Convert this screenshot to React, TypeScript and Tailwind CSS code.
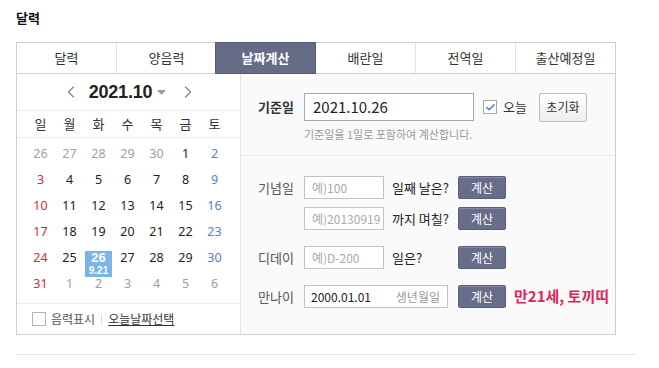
import { Check, ChevronLeft, ChevronRight } from 'lucide-react';

const FONT = { fontFamily: '"Noto Sans CJK KR", "Noto Sans", sans-serif' };

const tabs = ['달력', '양음력', '날짜계산', '배란일', '전역일', '출산예정일'];
const weekdays = ['일', '월', '화', '수', '목', '금', '토'];

type Day = { d: number; other?: boolean; lunar?: string };

const weeks: Day[][] = [
  [{ d: 26, other: true }, { d: 27, other: true }, { d: 28, other: true }, { d: 29, other: true }, { d: 30, other: true }, { d: 1 }, { d: 2 }],
  [{ d: 3 }, { d: 4 }, { d: 5 }, { d: 6 }, { d: 7 }, { d: 8 }, { d: 9 }],
  [{ d: 10 }, { d: 11 }, { d: 12 }, { d: 13 }, { d: 14 }, { d: 15 }, { d: 16 }],
  [{ d: 17 }, { d: 18 }, { d: 19 }, { d: 20 }, { d: 21 }, { d: 22 }, { d: 23 }],
  [{ d: 24 }, { d: 25 }, { d: 26, lunar: '9.21' }, { d: 27 }, { d: 28 }, { d: 29 }, { d: 30 }],
  [{ d: 31 }, { d: 1, other: true }, { d: 2, other: true }, { d: 3, other: true }, { d: 4, other: true }, { d: 5, other: true }, { d: 6, other: true }],
];

function dayColor(day: Day, col: number) {
  if (day.other) return 'text-[#a0a0a0]';
  if (col === 0) return 'text-[#e0263c]';
  if (col === 6) return 'text-[#5b7dd6]';
  return 'text-[#222]';
}

function CalcButton() {
  return (
    <button className="w-[48px] h-[23px] rounded-[2px] bg-[#686d89] border border-[#5a5e78] text-white text-[12px] leading-none shadow-[inset_0_1px_0_#8488a2]">
      계산
    </button>
  );
}

function Calendar() {
  return (
    <div className="w-[224px] border-r border-[#e3e3e3] bg-white flex flex-col">
      {/* 헤더 */}
      <div className="h-[37px] border-b border-[#ececec] flex items-center justify-center pl-[2px]">
        <ChevronLeft className="w-[20px] h-[20px] text-[#888]" strokeWidth={1.6} />
        <span className="ml-[8px] text-[18px] font-bold text-[#222] tracking-[-0.2px]" style={{ fontFamily: '"Liberation Sans", Arial, sans-serif' }}>
          2021.10
        </span>
        <svg width="9" height="6" viewBox="0 0 9 6" className="ml-[5px] mt-[2px]">
          <path d="M0 0 L9 0 L4.5 5 Z" fill="#9a9a9a" />
        </svg>
        <ChevronRight className="ml-[12px] w-[20px] h-[20px] text-[#888]" strokeWidth={1.6} />
      </div>

      {/* 요일 */}
      <div className="h-[27px] border-b border-[#ececec] px-[9px] grid grid-cols-[repeat(7,29px)] items-center">
        {weekdays.map(w => (
          <span key={w} className="text-center text-[13px] text-[#333]">{w}</span>
        ))}
      </div>

      {/* 날짜 */}
      <div className="pt-[9px] px-[9px] grid grid-cols-[repeat(7,29px)] grid-rows-[repeat(6,26px)]" style={{ fontFamily: '"Noto Sans", sans-serif' }}>
        {weeks.map((week, wi) =>
          week.map((day, ci) =>
            day.lunar ? (
              <div key={`${wi}-${ci}`} className="flex justify-center">
                <div
                  className="w-[27px] h-[26px] bg-[#78b5e8] flex flex-col items-center text-white"
                  style={{ fontFamily: '"Liberation Sans", Arial, sans-serif' }}
                >
                  <span className="text-[13px] font-bold leading-[14px]">{day.d}</span>
                  <span className="text-[10px] font-bold leading-[12px]">{day.lunar}</span>
                </div>
              </div>
            ) : (
              <span key={`${wi}-${ci}`} className={`text-center text-[12.5px] leading-[14px] ${dayColor(day, ci)}`}>
                {day.d}
              </span>
            )
          )
        )}
      </div>

      {/* 하단 */}
      <div className="h-[31px] border-t border-[#ececec] flex items-center pl-[15px] text-[12px] text-[#555]">
        <span className="w-[14px] h-[14px] border border-[#b5b5b5] bg-white" />
        <span className="ml-[5px]">음력표시</span>
        <span className="mx-[6px] w-px h-[10px] bg-[#ddd]" />
        <span className="underline text-[#333]">오늘날짜선택</span>
      </div>
    </div>
  );
}

function Calculator() {
  return (
    <div className="flex-1 bg-[#fafafa]">
      {/* 기준일 */}
      <div className="h-[82px] border-b border-[#ececec] pl-[17px] pt-[19px]">
        <div className="flex items-center h-[28px]">
          <span className="w-[46px] text-[13px] font-bold text-[#333]">기준일</span>
          <div className="w-[170px] h-[28px] border border-[#a9a9a9] bg-white flex items-center pl-[8px] text-[15px] text-[#222]">
            2021.10.26
          </div>
          <span className="ml-[9px] w-[14px] h-[14px] border border-[#a8a8a8] bg-white flex items-center justify-center">
            <Check className="w-[11px] h-[11px] text-[#4a6fdc]" strokeWidth={3} />
          </span>
          <span className="ml-[6px] text-[13px] text-[#333]">오늘</span>
          <button className="ml-[12px] w-[48px] h-[29px] border border-[#bdbdbd] rounded-[2px] bg-gradient-to-b from-white to-[#eeeeee] text-[12px] text-[#333]">
            초기화
          </button>
        </div>
        <p className="ml-[46px] mt-[6px] text-[11px] text-[#999] leading-[14px]">기준일을 1일로 포함하여 계산합니다.</p>
      </div>

      {/* 계산 항목 */}
      <div className="pl-[17px] pt-[20px] flex flex-col text-[13px]">
        <div className="flex items-center h-[23px]">
          <span className="w-[46px] text-[#555]">기념일</span>
          <div className="w-[80px] h-[23px] border border-[#c3c3c3] bg-white flex items-center pl-[7px] text-[12px] text-[#aaa]">예)100</div>
          <span className="ml-[8px] w-[66px] text-[#222]">일째 날은?</span>
          <CalcButton />
        </div>
        <div className="flex items-center h-[23px] mt-[8px]">
          <span className="w-[46px]" />
          <div className="w-[80px] h-[23px] border border-[#c3c3c3] bg-white flex items-center pl-[7px] text-[12px] text-[#aaa]">예)20130919</div>
          <span className="ml-[8px] w-[66px] text-[#222]">까지 며칠?</span>
          <CalcButton />
        </div>
        <div className="flex items-center h-[23px] mt-[16px]">
          <span className="w-[46px] text-[#555]">디데이</span>
          <div className="w-[80px] h-[23px] border border-[#c3c3c3] bg-white flex items-center pl-[7px] text-[12px] text-[#aaa]">예)D-200</div>
          <span className="ml-[8px] w-[66px] text-[#222]">일은?</span>
          <CalcButton />
        </div>
        <div className="flex items-center h-[23px] mt-[16px]">
          <span className="w-[46px] text-[#555]">만나이</span>
          <div className="w-[144px] h-[23px] border border-[#c3c3c3] bg-white flex items-center justify-between pl-[6px] pr-[7px] text-[12px]">
            <span className="text-[#222]">2000.01.01</span>
            <span className="text-[#999]">생년월일</span>
          </div>
          <span className="ml-[10px]"><CalcButton /></span>
          <span className="ml-[8px] text-[15px] font-bold text-[#e0245a]">만21세, 토끼띠</span>
        </div>
      </div>
    </div>
  );
}

export default function App() {
  return (
    <div className="w-[659px] h-[368px] bg-white" style={FONT}>
      <div className="w-[620px] ml-[16px]">
        <h2 className="pt-[10px] h-[42px] text-[13px] font-bold text-[#111] leading-[16px]">달력</h2>

        {/* 탭 */}
        <div className="w-[600px] h-[32px] border border-[#cfcfcf] flex">
          {tabs.map((t, i) => (
            <div
              key={t}
              className={
                t === '날짜계산'
                  ? 'w-[101px] -my-px -ml-px h-[32px] bg-[#666b86] border border-[#555a74] flex items-center justify-center text-[13px] font-bold text-white'
                  : `flex-1 flex items-center justify-center text-[13px] text-[#333] ${i < tabs.length - 1 && tabs[i + 1] !== '날짜계산' ? 'border-r border-[#e2e2e2]' : ''}`
              }
            >
              {t}
            </div>
          ))}
        </div>

        {/* 본문 */}
        <div className="w-[600px] border-x border-b border-[#cfcfcf] flex">
          <Calendar />
          <Calculator />
        </div>

        <div className="mt-[19px] w-[620px] h-px bg-[#e5e5e5]" />
      </div>
    </div>
  );
}
